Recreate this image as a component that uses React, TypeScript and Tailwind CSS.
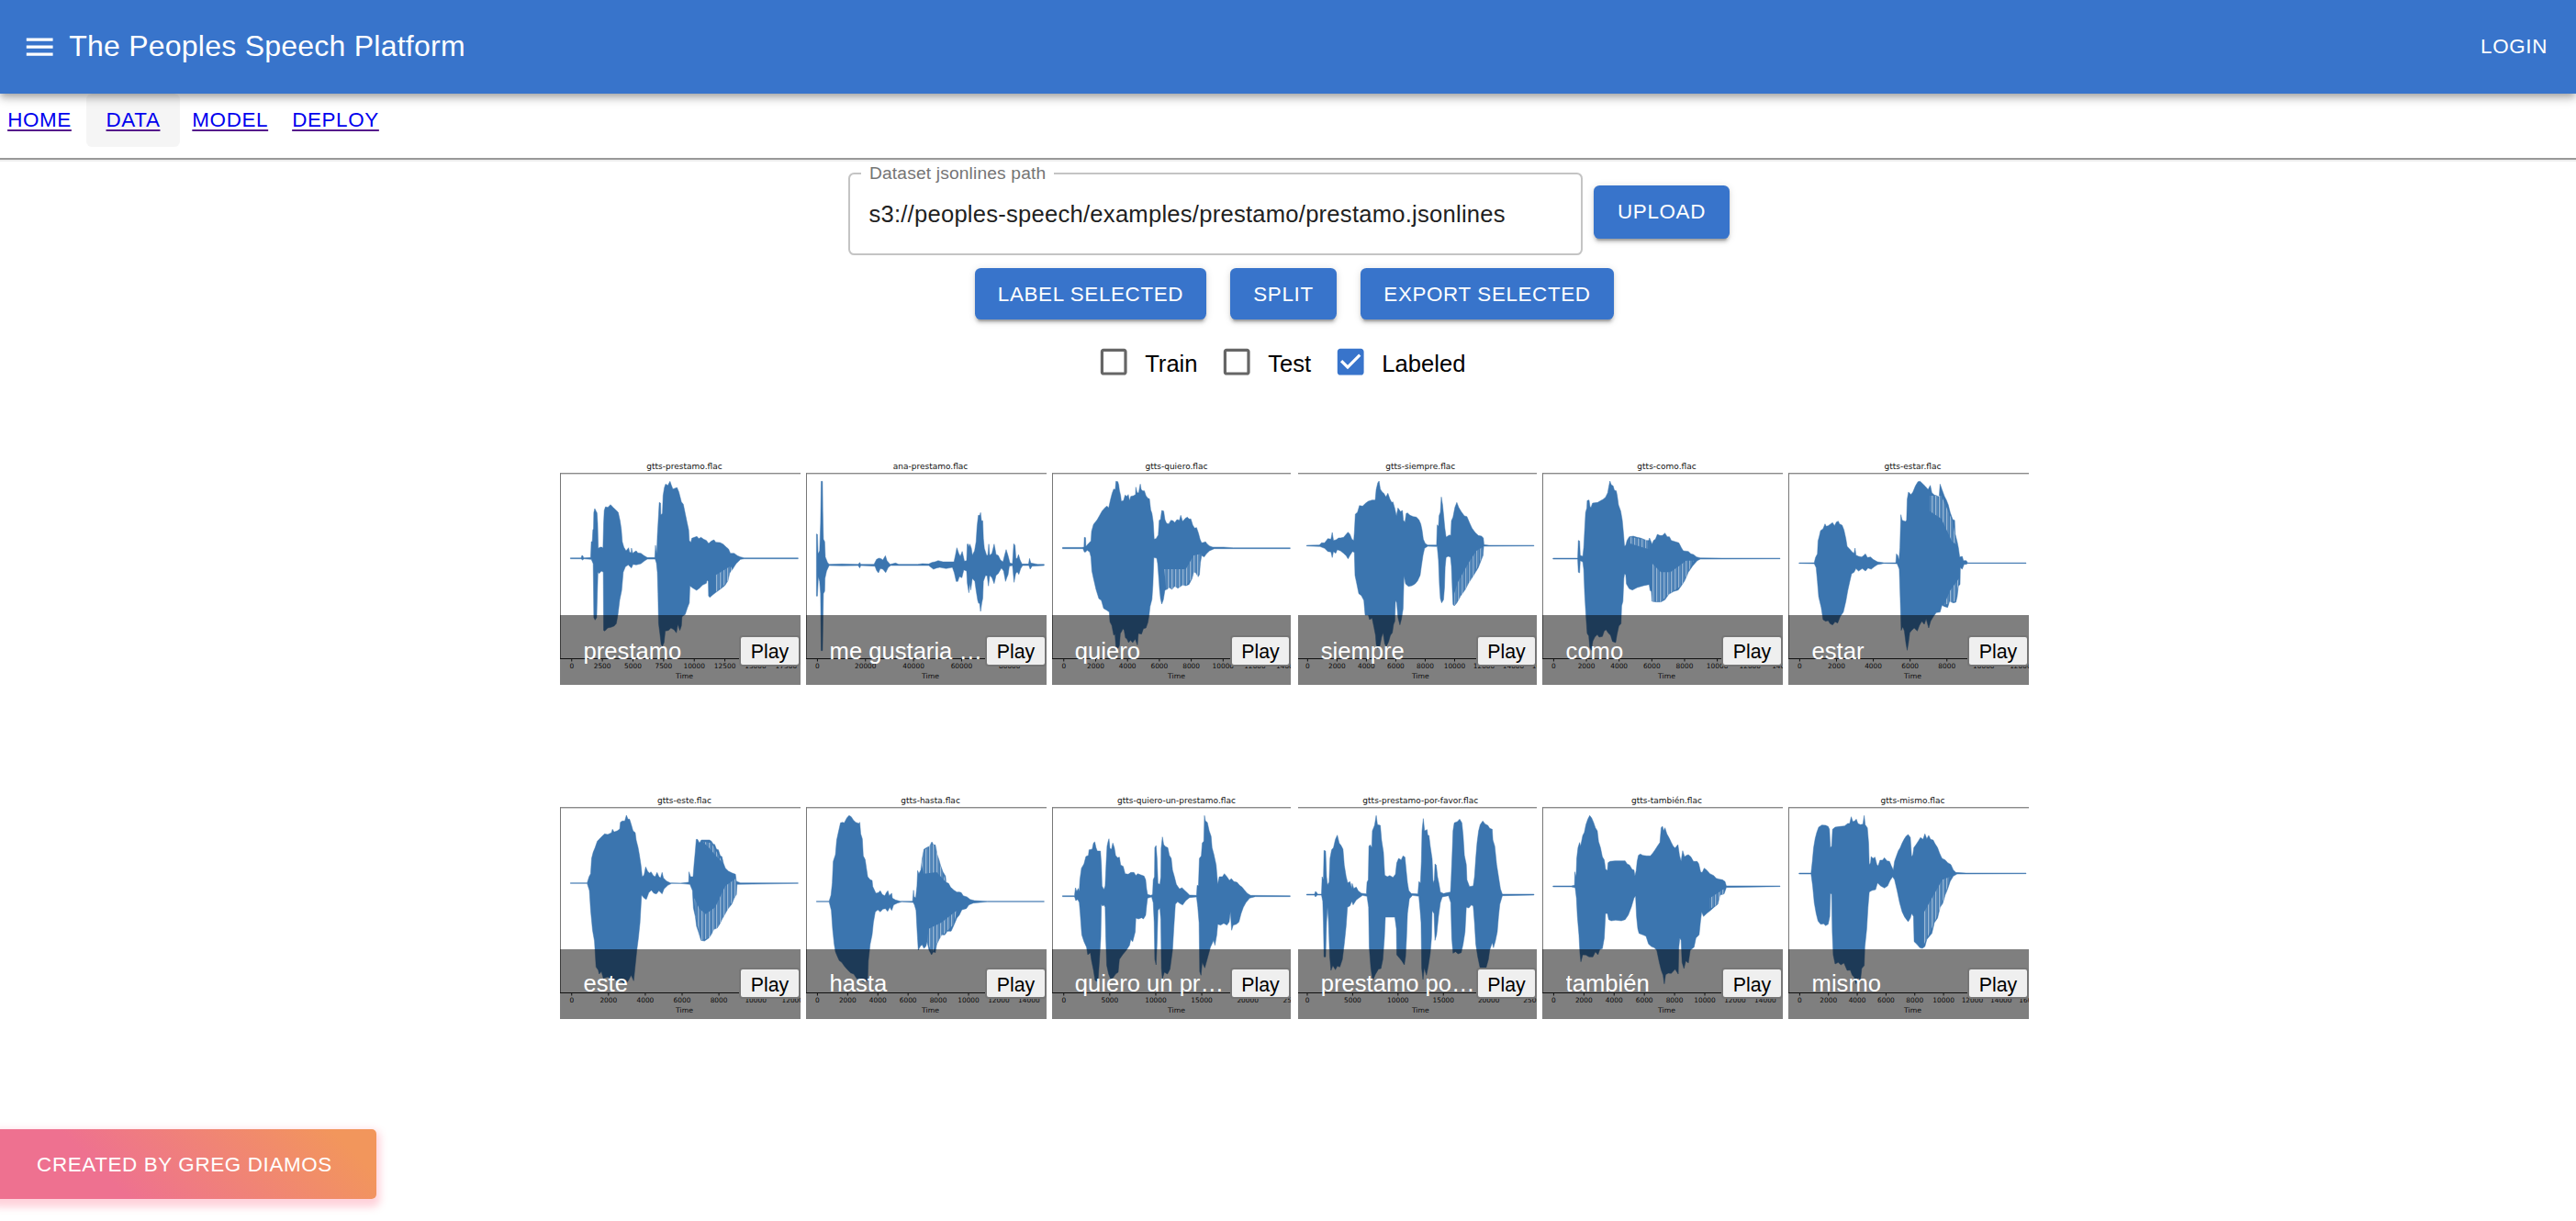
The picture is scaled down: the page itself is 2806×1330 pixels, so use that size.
import React from "react";

type Clip = {
  file: string;
  label: string;
  width: string;
  x0: number;
  row: number;
  zero: number;
  step: number;
  unit: number;
  count: number;
  up: string;
  down: string;
  hatch?: string[];
  noLeft?: boolean;
};

// Horizontal and vertical sampling of the waveform outlines.
const SX = 2.9037;
const SY = 3;

const W262 = "w-[262px]";
const W260 = "w-[260px]";

const CLIPS: Clip[] = [
  {
    file: "gtts-prestamo.flac", label: "prestamo", width: W262, x0: 29, row: 0, zero: 66, step: 96.9, unit: 2500, count: 8,
    up: "62,353 96,353 98,346 101,346 104,353 126,352 128,300 131,300 133,262 135,258 136,205 139,192 143,200 146,206 148,240 150,322 156,318 162,318 165,322 167,240 169,198 173,186 180,188 189,179 195,186 205,196 213,204 219,232 223,260 226,300 231,318 238,330 246,320 249,334 254,337 255,321 259,338 264,334 270,330 275,337 285,338 295,346 305,352 329,352 331,312 335,340 337,280 341,210 343,172 347,174 348,212 353,208 355,150 359,124 363,112 370,116 377,103 381,115 386,128 392,126 399,123 405,138 413,170 419,178 425,208 431,238 436,262 438,297 443,302 446,289 462,283 468,290 475,286 483,292 492,296 499,306 508,298 516,294 522,302 535,303 545,308 555,318 562,324 568,338 580,338 590,346 600,350 612,353 782,353",
    down: "62,356 96,356 100,360 105,356 128,358 134,372 135,450 136,548 140,556 145,548 147,470 149,400 153,404 160,396 166,400 167,590 171,592 180,582 190,580 200,576 207,568 212,540 218,490 224,460 229,400 236,382 245,376 255,386 260,374 270,376 285,372 295,364 305,357 330,357 334,370 337,400 339,470 341,568 345,600 349,636 353,642 358,630 362,592 372,590 380,582 390,588 397,598 402,570 408,590 413,575 415,545 425,538 432,516 438,500 440,445 450,452 461,459 470,452 480,442 492,436 494,426 498,430 499,478 503,482 512,474 522,466 535,456 550,444 560,428 566,402 575,390 586,372 600,358 612,356 782,356",
    hatch: ["520,410 568,380 575,390 560,428 545,446 522,464"],
  },
  {
    file: "ana-prestamo.flac", label: "me gustaria un prestamo", width: W262, x0: 807, row: 0, zero: 843, step: 152, unit: 20000, count: 5,
    up: "840,275 843,276 845,340 850,330 853,240 855,103 859,103 860,200 862,292 866,300 868,350 875,368 880,374 920,373 972,374 977,368 980,374 1022,374 1030,358 1038,354 1045,356 1050,360 1058,346 1063,362 1073,374 1090,370 1100,374 1160,374 1175,372 1195,373 1205,368 1215,366 1225,362 1240,366 1260,366 1275,366 1280,342 1284,320 1290,338 1295,348 1301,332 1308,364 1315,362 1317,308 1320,308 1322,318 1325,308 1330,322 1333,344 1340,330 1345,300 1348,250 1352,214 1357,214 1359,205 1362,232 1366,232 1368,290 1371,322 1378,344 1382,345 1385,308 1388,345 1395,338 1402,308 1405,324 1408,342 1415,345 1422,360 1430,366 1435,345 1440,326 1446,346 1452,370 1460,372 1464,307 1468,312 1471,355 1475,355 1479,342 1484,360 1490,373 1511,373 1514,355 1518,370 1540,374 1560,374",
    down: "840,478 843,478 846,415 850,430 853,470 855,656 859,656 862,470 866,462 867,420 872,396 880,378 920,379 972,378 977,386 980,378 1025,380 1030,394 1036,402 1042,388 1050,390 1059,401 1067,384 1075,378 1195,378 1210,390 1220,386 1230,384 1250,388 1270,384 1276,402 1282,430 1287,430 1292,414 1300,418 1306,392 1315,396 1317,435 1322,467 1325,436 1328,458 1333,420 1341,430 1345,460 1350,492 1353,502 1356,500 1359,528 1363,500 1366,485 1368,430 1375,410 1380,412 1384,445 1388,410 1395,418 1402,437 1408,410 1415,404 1425,386 1432,396 1438,430 1442,418 1446,408 1450,380 1460,378 1465,433 1470,405 1475,398 1480,407 1486,388 1492,378 1512,378 1516,390 1522,380 1560,378",
  },
  {
    file: "gtts-quiero.flac", label: "quiero", width: W260, x0: 17, row: 0, zero: 54, step: 100.8, unit: 2000, count: 8,
    up: "50,319 110,319 118,318 119,286 123,287 124,316 132,306 140,298 142,266 148,244 160,228 175,200 185,188 191,184 196,190 202,162 207,142 212,128 217,130 219,103 225,104 228,115 230,132 234,150 236,168 243,166 248,148 254,152 258,146 262,166 266,152 275,150 281,146 282,122 286,140 291,140 296,112 299,130 304,134 309,134 314,150 320,158 325,160 329,196 333,208 337,236 340,292 346,290 353,278 356,230 360,228 364,198 370,200 374,228 379,240 386,242 393,230 400,232 405,238 412,228 420,230 424,214 430,234 438,224 445,220 450,226 456,226 462,246 468,256 474,254 480,272 485,292 490,304 498,302 502,300 508,308 515,314 525,318 560,318 590,320 770,320",
    down: "50,323 115,323 119,334 123,334 128,328 136,334 140,350 143,396 148,420 156,456 165,486 173,492 180,518 190,524 198,530 200,562 206,574 212,606 216,602 219,645 225,650 230,640 233,600 238,592 241,584 245,590 249,614 254,618 259,630 265,622 272,630 280,618 287,638 290,600 300,602 306,584 314,582 320,564 324,540 327,512 333,488 336,440 339,352 348,354 351,372 354,412 357,455 360,486 364,504 369,490 374,458 382,455 388,450 396,456 405,446 415,452 430,442 440,444 450,440 460,420 465,400 472,402 479,415 483,408 486,370 490,345 498,350 505,340 515,330 530,323 770,323",
    hatch: ["372,390 440,390 465,345 488,340 486,370 479,415 460,420 440,444 378,458"],
  },
  {
    file: "gtts-siempre.flac", label: "siempre", width: W260, x0: 796, row: 0, zero: 826, step: 93, unit: 2000, count: 9, noLeft: true,
    up: "823,312 863,311 870,304 880,304 890,290 900,292 904,270 908,296 916,294 924,288 930,288 940,286 948,276 954,269 960,276 966,292 972,296 974,270 977,210 984,204 990,182 1000,184 1010,174 1018,168 1030,164 1040,164 1043,130 1048,108 1052,102 1056,128 1062,138 1067,142 1074,154 1080,142 1086,160 1092,172 1096,170 1102,192 1107,216 1112,190 1120,202 1126,198 1129,230 1134,236 1138,208 1142,206 1150,214 1160,218 1170,220 1178,228 1184,242 1188,262 1192,292 1198,306 1206,311 1234,311 1236,245 1240,250 1242,215 1246,204 1249,154 1253,180 1256,210 1260,255 1264,285 1275,278 1279,280 1281,232 1286,220 1292,188 1298,172 1304,188 1312,202 1322,216 1330,218 1338,238 1346,256 1356,270 1366,280 1376,282 1382,288 1384,310 1400,312 1542,312",
    down: "823,314 865,316 880,322 890,332 900,334 904,352 908,332 915,338 920,326 930,330 940,338 948,346 954,356 960,345 968,332 974,335 976,410 980,430 988,470 996,476 1004,492 1008,540 1018,540 1022,555 1030,550 1036,580 1041,606 1043,636 1048,650 1055,640 1060,612 1065,598 1070,634 1075,643 1082,628 1088,606 1094,598 1098,570 1102,560 1104,492 1108,500 1112,548 1118,572 1123,552 1128,520 1131,412 1136,438 1145,446 1156,444 1166,438 1174,428 1182,410 1186,380 1191,345 1196,322 1206,315 1236,316 1240,360 1243,440 1246,486 1250,500 1256,490 1259,450 1261,384 1264,352 1270,348 1278,350 1281,380 1284,460 1286,505 1290,510 1298,500 1310,478 1325,456 1335,436 1350,412 1366,385 1376,358 1381,345 1383,315 1542,314",
    hatch: ["1290,510 1325,456 1350,412 1378,350 1380,318 1360,330 1335,370 1300,435 1290,470"],
  },
  {
    file: "gtts-como.flac", label: "como", width: W262, x0: 0, row: 0, zero: 36, step: 103.5, unit: 2000, count: 8,
    up: "34,354 112,354 114,296 118,298 120,345 128,348 131,320 134,262 137,205 141,190 142,166 148,164 151,186 154,188 159,174 175,172 185,166 192,162 200,155 207,140 210,122 214,102 218,114 224,118 228,132 234,134 237,150 241,180 248,200 253,230 257,275 260,314 264,312 268,296 275,284 288,282 300,286 310,288 320,292 330,296 337,296 339,288 344,300 347,308 352,296 358,292 364,276 372,280 380,280 388,272 395,284 402,284 408,296 420,300 432,304 440,320 446,330 462,332 470,340 478,342 488,350 500,353 570,354 752,354",
    down: "34,357 112,357 114,400 118,402 120,362 128,366 131,390 134,470 138,540 142,600 147,608 150,645 155,655 160,625 166,612 174,604 180,612 190,610 196,592 202,588 208,598 216,606 222,626 232,630 236,605 242,576 249,568 251,510 255,495 258,420 260,406 264,408 266,438 275,454 285,458 300,450 320,444 338,440 341,460 345,462 347,495 360,497 375,497 388,490 400,472 415,463 430,458 440,444 450,428 462,400 475,380 490,362 500,357 752,356",
    hatch: ["346,370 375,400 405,400 430,382 455,362 478,362 462,400 440,444 400,472 375,497 346,495", "275,284 337,296 337,325 275,305"],
  },
  {
    file: "gtts-estar.flac", label: "estar", width: W262, x0: 778, row: 0, zero: 814, step: 116.4, unit: 2000, count: 7,
    up: "812,369 860,369 864,352 870,340 872,298 876,282 880,264 888,258 894,242 898,250 904,248 912,242 918,238 924,248 930,236 936,233 940,242 948,246 954,262 960,290 964,316 972,324 980,334 986,338 989,321 992,344 1000,348 1010,350 1016,346 1022,340 1028,352 1038,350 1046,358 1060,366 1080,369 1118,369 1120,340 1124,345 1128,360 1131,320 1134,212 1138,230 1148,234 1152,230 1154,162 1158,138 1166,146 1172,138 1180,118 1188,104 1195,103 1204,112 1212,120 1220,130 1227,116 1232,140 1240,148 1248,150 1255,154 1258,112 1264,130 1272,152 1278,164 1284,180 1290,205 1298,228 1304,230 1306,275 1312,300 1316,320 1320,350 1328,348 1332,362 1341,362 1345,369 1530,369",
    down: "812,371 860,372 866,385 870,430 874,480 882,515 888,555 896,560 904,558 910,568 918,572 926,562 934,566 942,545 952,530 960,495 966,460 972,432 978,405 986,400 992,388 1000,396 1012,388 1022,396 1030,386 1040,390 1050,382 1060,375 1080,371 1122,372 1126,382 1129,390 1132,485 1135,590 1140,578 1145,592 1150,632 1154,655 1158,630 1162,598 1168,590 1176,582 1186,592 1192,575 1200,560 1208,570 1214,552 1222,582 1228,560 1236,546 1246,532 1258,530 1264,508 1272,512 1282,515 1288,495 1300,500 1308,498 1312,480 1316,445 1321,440 1322,385 1328,390 1334,374 1341,374 1345,371 1530,371",
    hatch: ["1225,150 1262,150 1298,235 1310,310 1296,300 1262,225 1225,200", "1290,460 1318,420 1316,440 1305,495 1270,508"],
  },
  {
    file: "gtts-este.flac", label: "este", width: W262, x0: 29, row: 1, zero: 66, step: 116.4, unit: 2000, count: 7,
    up: "62,320 115,320 121,300 126,290 129,240 134,220 140,205 147,184 158,172 170,160 180,162 192,156 195,145 200,154 210,150 218,144 220,122 226,118 234,118 239,99 244,112 249,112 254,128 260,150 267,156 270,180 276,205 280,228 285,262 289,300 295,294 300,268 306,282 312,288 317,284 324,296 330,300 336,286 342,300 347,304 352,286 356,304 366,314 378,320 410,321 436,318 437,284 442,300 450,300 453,260 457,216 460,178 464,178 470,190 476,180 490,180 502,180 508,184 514,194 518,194 524,210 530,212 536,232 541,234 546,256 552,272 562,282 574,288 584,292 587,315 600,320 782,320",
    down: "62,322 115,322 122,345 126,410 132,475 138,510 143,595 150,605 153,618 160,610 166,632 180,628 192,632 200,636 210,640 224,642 236,652 245,640 254,622 262,640 266,600 272,540 277,500 282,450 287,360 295,370 302,374 310,352 318,344 326,354 334,356 342,346 352,356 358,340 370,328 382,322 410,322 440,325 448,345 451,402 457,430 461,462 467,480 475,508 486,510 500,500 508,488 516,472 526,468 534,455 542,438 552,420 560,405 572,390 580,370 587,358 589,325 782,322",
    hatch: ["480,185 508,190 545,256 525,235 500,205", "454,370 470,405 490,422 520,400 552,330 586,305 587,358 552,420 526,468 500,500 475,508 458,430"],
  },
  {
    file: "gtts-hasta.flac", label: "hasta", width: W262, x0: 807, row: 1, zero: 843, step: 95.6, unit: 2000, count: 8,
    up: "840,380 880,380 886,360 890,320 893,250 900,228 904,180 909,156 916,124 922,122 928,124 936,108 943,100 950,104 956,114 964,122 974,126 977,122 980,160 985,176 988,232 994,244 998,272 1002,300 1010,310 1016,312 1018,332 1028,354 1036,352 1042,346 1048,358 1056,362 1062,350 1066,346 1070,362 1078,354 1080,370 1090,376 1105,380 1144,380 1147,344 1149,366 1154,368 1158,330 1160,280 1164,290 1170,278 1174,244 1180,210 1190,204 1198,200 1205,186 1210,196 1216,196 1222,228 1228,246 1232,262 1240,284 1248,298 1250,318 1258,322 1264,334 1275,344 1284,350 1292,350 1298,352 1304,362 1316,366 1326,374 1340,378 1380,380 1560,380",
    down: "840,382 880,382 887,410 891,470 896,520 900,545 906,560 912,574 920,580 928,592 938,604 948,614 958,618 968,634 976,632 984,640 992,645 1002,640 1004,575 1010,520 1016,490 1020,450 1026,415 1034,408 1042,415 1050,406 1058,404 1065,413 1072,400 1078,410 1084,392 1096,386 1110,382 1146,384 1150,392 1155,410 1158,470 1162,540 1168,528 1174,522 1180,534 1186,528 1190,512 1196,540 1204,555 1210,545 1216,548 1220,522 1228,505 1236,490 1246,490 1254,478 1266,478 1276,455 1284,435 1292,425 1300,408 1314,404 1322,392 1336,386 1380,382 1560,382",
    hatch: ["1172,260 1180,215 1205,192 1216,200 1232,265 1250,318 1220,285 1180,290", "1190,510 1205,550 1230,500 1275,455 1284,410 1235,450 1195,470"],
  },
  {
    file: "gtts-quiero-un-prestamo.flac", label: "quiero un prestamo", width: W260, x0: 17, row: 1, zero: 54, step: 145.5, unit: 5000, count: 6,
    up: "50,362 88,362 91,336 95,348 100,338 103,348 105,310 110,272 118,258 124,234 132,230 134,212 144,210 148,190 152,186 156,205 160,216 165,216 170,216 173,260 175,330 181,342 185,330 188,260 191,200 194,186 197,176 200,208 205,210 209,190 214,205 218,230 224,238 230,236 234,262 242,266 248,290 258,292 266,286 276,286 282,296 288,290 298,294 308,298 313,310 316,340 319,358 330,361 335,358 337,310 341,300 342,205 346,198 349,240 352,322 358,325 361,300 362,208 366,170 370,195 376,202 383,205 388,230 394,240 398,278 404,300 410,325 420,340 428,336 436,344 444,352 452,360 474,361 476,328 480,330 483,240 489,232 492,190 497,184 499,100 502,118 508,122 514,150 520,168 523,205 529,228 536,262 541,325 546,300 556,300 562,290 570,300 578,312 584,306 592,316 602,318 610,328 618,334 626,344 634,354 645,361 770,362",
    down: "50,365 88,365 92,378 98,374 103,384 106,420 111,490 118,512 126,530 130,555 138,548 142,575 148,605 153,638 158,642 163,630 167,570 171,500 173,390 177,396 181,392 185,400 187,500 190,590 196,618 202,634 210,630 218,618 226,612 230,570 240,555 252,540 262,524 266,505 272,512 280,480 282,435 290,438 300,434 306,438 313,426 316,395 319,370 332,366 337,385 340,450 342,570 346,588 349,520 352,410 358,402 361,440 363,600 366,634 372,612 382,618 390,602 398,540 402,470 407,390 414,382 422,388 430,392 440,378 452,368 474,366 478,400 482,450 484,610 488,622 492,580 500,598 508,568 518,530 528,508 532,524 538,490 541,455 550,458 560,452 570,458 577,448 581,415 585,475 590,458 600,455 608,448 615,420 622,400 630,385 642,370 660,365 770,365",
  },
  {
    file: "gtts-prestamo-por-favor.flac", label: "prestamo por favor", width: W260, x0: 796, row: 1, zero: 825, step: 143.5, unit: 5000, count: 6, noLeft: true,
    up: "823,357 848,357 851,348 855,352 858,357 870,357 872,300 876,310 878,214 883,216 886,300 889,326 894,318 897,240 902,212 908,205 914,178 920,164 926,190 932,198 938,210 942,262 948,300 953,320 960,316 966,338 967,322 972,338 980,334 986,346 996,354 1012,356 1014,318 1018,310 1020,200 1024,196 1029,205 1031,150 1038,132 1043,100 1047,130 1056,132 1060,180 1066,220 1070,295 1078,300 1086,296 1096,302 1104,292 1108,255 1114,240 1122,245 1128,232 1134,236 1138,280 1142,320 1146,345 1154,355 1175,356 1178,316 1183,320 1186,250 1188,150 1192,110 1196,150 1204,146 1206,164 1210,165 1214,200 1220,242 1223,320 1227,310 1229,258 1233,262 1237,300 1242,325 1246,350 1256,355 1268,352 1278,350 1280,310 1284,210 1286,150 1290,124 1300,120 1307,112 1314,124 1318,165 1322,230 1328,260 1330,310 1338,332 1350,330 1354,300 1358,240 1362,190 1367,150 1372,130 1380,118 1388,128 1396,132 1402,142 1410,145 1412,180 1418,200 1424,260 1430,300 1436,340 1442,357 1542,357",
    down: "823,360 848,360 851,366 856,360 870,360 874,380 876,450 878,562 883,562 886,450 889,400 892,440 896,560 900,606 906,590 914,604 920,592 928,595 936,570 942,520 948,460 952,400 960,395 966,380 970,392 980,376 990,368 1000,361 1014,364 1019,400 1021,530 1026,598 1032,640 1040,620 1050,602 1058,600 1064,570 1069,500 1072,432 1102,432 1107,470 1108,555 1116,565 1124,575 1132,588 1136,560 1139,500 1142,420 1148,372 1158,361 1178,364 1182,410 1185,450 1187,600 1191,636 1195,598 1202,622 1208,590 1214,550 1218,500 1220,412 1226,420 1229,508 1234,490 1240,430 1246,385 1252,366 1272,362 1279,385 1282,500 1286,550 1294,545 1302,552 1312,548 1318,520 1324,480 1328,400 1336,402 1344,392 1350,396 1354,450 1358,520 1364,560 1372,600 1380,622 1390,600 1398,570 1402,540 1410,515 1414,532 1420,510 1426,480 1430,430 1434,390 1442,362 1542,360",
  },
  {
    file: "gtts-también.flac", label: "también", width: W262, x0: 0, row: 1, zero: 36, step: 95.6, unit: 2000, count: 8,
    up: "34,330 92,330 102,328 103,284 107,300 109,240 113,205 118,188 121,200 124,185 128,165 133,155 138,130 144,112 150,100 156,108 162,122 168,140 174,150 178,185 184,205 190,235 196,245 200,275 206,280 208,254 214,250 230,248 262,248 268,258 276,262 284,276 290,278 293,298 297,280 300,250 304,230 310,226 318,230 330,232 342,232 350,222 358,210 364,200 372,188 376,140 380,135 384,150 388,140 394,160 402,175 408,188 414,200 420,206 429,195 434,230 439,250 444,215 450,235 456,230 462,228 470,235 478,250 490,250 495,258 501,285 506,286 512,272 520,278 530,290 542,296 550,305 560,308 570,310 578,316 582,330 752,330",
    down: "34,333 92,333 104,336 108,370 111,430 116,490 119,550 122,578 128,555 138,556 148,562 160,562 168,545 176,555 182,538 190,535 196,500 200,420 206,420 210,440 218,444 232,442 250,444 262,440 272,425 282,398 290,370 295,362 298,430 302,470 306,485 318,490 328,494 336,520 345,528 354,532 362,540 370,580 376,605 382,622 386,650 390,620 398,615 408,616 420,602 430,618 432,530 435,500 439,508 442,580 448,600 454,575 462,582 468,540 480,530 486,500 496,490 500,450 504,415 510,430 520,420 532,410 545,398 555,390 562,360 575,356 582,335 752,332",
    hatch: ["530,370 575,340 575,356 562,360 555,390 530,405"],
  },
  {
    file: "gtts-mismo.flac", label: "mismo", width: W262, x0: 778, row: 1, zero: 814, step: 91, unit: 2000, count: 9,
    up: "812,288 850,288 854,250 858,205 863,175 868,155 874,138 884,131 896,132 904,136 908,145 911,205 915,200 918,145 926,138 940,136 956,134 966,126 972,126 977,104 982,120 988,118 993,112 998,126 1006,130 1014,128 1018,100 1021,130 1028,140 1032,190 1034,260 1038,255 1040,234 1046,240 1052,236 1058,260 1062,265 1068,246 1076,246 1082,238 1090,248 1098,250 1104,265 1110,278 1114,250 1120,232 1126,215 1132,205 1138,190 1144,178 1150,168 1157,162 1164,172 1168,235 1172,228 1175,205 1182,195 1190,182 1196,172 1204,178 1210,160 1216,176 1222,165 1228,178 1236,180 1242,192 1250,205 1256,222 1264,240 1274,245 1282,254 1292,260 1300,278 1308,286 1340,288 1530,288",
    down: "812,291 850,291 855,330 860,385 866,420 872,445 880,455 890,454 896,460 904,455 909,430 911,355 915,356 917,480 920,555 926,585 936,580 944,588 954,582 964,606 974,605 980,622 986,628 992,650 1000,630 1006,640 1010,600 1018,590 1020,530 1026,470 1030,400 1034,350 1042,345 1054,342 1060,320 1070,330 1082,337 1092,330 1100,312 1108,300 1114,310 1122,345 1130,385 1138,415 1146,432 1157,447 1164,435 1168,420 1174,430 1176,512 1184,520 1194,532 1202,534 1210,528 1216,505 1224,495 1232,485 1240,450 1250,435 1258,400 1266,388 1274,360 1282,340 1290,315 1300,298 1312,291 1530,290",
    hatch: ["1205,420 1265,310 1290,300 1274,360 1240,450 1215,505 1205,525"],
  },
];

function Plot({ clip, id }: { clip: Clip; id: string }) {
  const y0 = clip.row === 0 ? 18 : 15;
  const outline = clip.up + " " + clip.down.split(" ").reverse().join(" ");
  const mid = clip.noLeft ? 133.3 : 135.5;
  const ticks = Array.from({ length: clip.count }, (_, i) => ({
    x: (clip.zero + i * clip.step - clip.x0) / SX,
    value: i * clip.unit,
  }));
  return (
    <svg className="block h-[250px] w-full overflow-hidden [font-family:'DejaVu_Sans',sans-serif]">
      <defs>
        <pattern id={id} width="11.615" height="40" patternUnits="userSpaceOnUse">
          <rect width="3.2" height="40" fill="#fff" opacity="0.5" />
          <rect x="5.8" width="2.9" height="40" fill="#fff" opacity="0.2" />
        </pattern>
      </defs>
      <text x={mid} y="14.6" fontSize="9" textAnchor="middle" fill="#111">{clip.file}</text>
      <rect x="0" y="19" width="262" height="1.4" fill="#8a8a8a" />
      {!clip.noLeft && <rect x="0" y="19.5" width="1" height="202" fill="#777" />}
      <g transform={`scale(${1 / SX} ${1 / SY}) translate(${-clip.x0} ${-y0})`}>
        <polygon points={outline} fill="#3b75af" stroke="#3b75af" strokeWidth="1.4" strokeLinejoin="round" />
        {clip.hatch?.map((h) => (
          <polygon key={h} points={h} fill={`url(#${id})`} />
        ))}
      </g>
      <rect x="0" y="221" width="262" height="1" fill="#222" />
      {ticks.map((t) => (
        <g key={t.value}>
          <rect x={t.x - 0.5} y="222" width="1" height="2.5" fill="#222" />
          <text x={t.x} y="232.4" fontSize="7.4" textAnchor="middle" fill="#111">{t.value}</text>
        </g>
      ))}
      <text x={mid} y="242.8" fontSize="7.7" textAnchor="middle" fill="#111">Time</text>
    </svg>
  );
}

function Tile({ clip, id }: { clip: Clip; id: string }) {
  const wide = clip.width === W262;
  const first = clip.row === 0;
  return (
    <div className={`relative h-[250px] overflow-hidden ${clip.width}`}>
      <Plot clip={clip} id={id} />
      <div className={`absolute inset-x-0 bottom-0 flex h-[76px] items-start bg-black/50 ${first ? "pt-[22px]" : "pt-[20px]"}`}>
        <span className={`-mt-px min-w-0 flex-1 truncate text-[25.6px] leading-[36px] text-white ${wide ? "ml-[25.6px]" : "ml-[24.8px]"}`}>{clip.label}</span>
        <button className={`h-[34px] shrink-0 rounded-[4px] border-2 border-[#767676] bg-[#efefef] text-center text-[21.33px] text-black ${wide ? "w-[67px]" : "w-[66px]"} ${first ? "leading-[32px]" : "leading-[34px]"}`}>
          Play
        </button>
      </div>
    </div>
  );
}

const RAISED =
  "shadow-[0_4.8px_1.6px_-3.2px_rgba(0,0,0,0.2),0_3.2px_3.2px_0_rgba(0,0,0,0.14),0_1.6px_8px_0_rgba(0,0,0,0.12)]";

function Action({ size, children }: { size: string; children: string }) {
  return (
    <button className={`rounded-[6.4px] bg-[#3874cb] text-[22.4px] tracking-[0.64px] text-white ${RAISED} ${size}`}>
      {children}
    </button>
  );
}

function Check({ label, checked, gap }: { label: string; checked?: boolean; gap: string }) {
  return (
    <label className={`flex items-center text-[25.6px] text-black ${gap}`}>
      <svg viewBox="0 0 24 24" className={`mr-[15.2px] size-[38.4px] shrink-0 ${checked ? "fill-[#3874cb]" : "fill-[#666]"}`}>
        {checked ? (
          <path d="M19 3H5c-1.11 0-2 .9-2 2v14c0 1.1.89 2 2 2h14c1.11 0 2-.9 2-2V5c0-1.1-.89-2-2-2zm-9 14l-5-5 1.41-1.41L10 14.17l7.59-7.59L19 8l-9 9z" />
        ) : (
          <path d="M19 5v14H5V5h14m0-2H5c-1.1 0-2 .9-2 2v14c0 1.1.9 2 2 2h14c1.1 0 2-.9 2-2V5c0-1.1-.9-2-2-2z" />
        )}
      </svg>
      <span className="pt-[2px] leading-[38px]">{label}</span>
    </label>
  );
}

const NAV = [
  { label: "HOME", box: "w-[102px]" },
  { label: "DATA", box: "w-[102px] bg-[#f5f5f5]" },
  { label: "MODEL", box: "w-[109.5px]" },
  { label: "DEPLOY", box: "w-[120px]" },
];

export default function App() {
  return (
    <div className="flex h-[1330px] w-[2806px] flex-col overflow-hidden bg-white [font-family:'Liberation_Sans',Arial,sans-serif]">
      <header className="relative z-10 flex h-[102px] shrink-0 items-center bg-[#3874cb] pl-[23.8px] pr-[31px] text-white shadow-[0_3.2px_6.4px_-1.6px_rgba(0,0,0,0.2),0_6.4px_8px_0_rgba(0,0,0,0.14),0_1.6px_16px_0_rgba(0,0,0,0.12)]">
        <svg viewBox="0 0 24 24" className="size-[38.4px] fill-white">
          <path d="M3 18h18v-2H3v2zm0-5h18v-2H3v2zm0-7v2h18V6H3z" />
        </svg>
        <h1 className="ml-[13px] flex-1 pb-[3px] text-[32px] leading-[50px] tracking-[0.24px]">The Peoples Speech Platform</h1>
        <button className="text-[22.4px] tracking-[0.64px]">LOGIN</button>
      </header>

      <nav className="-ml-2 flex h-[70px] shrink-0 items-start">
        {NAV.map((n) => (
          <a key={n.label} className={`h-[58px] rounded-[6.4px] text-center text-[22.4px] leading-[58px] tracking-[0.64px] text-[#0000ee] underline decoration-[#551a8b] decoration-2 underline-offset-[2.5px] ${n.box}`}>
            {n.label}
          </a>
        ))}
      </nav>
      <div className="h-1 shrink-0 border-t-2 border-b-2 border-t-[#999] border-b-[#eee]" />

      <main className="flex flex-col">
        <section className="ml-[924px] mt-3 flex h-[90px] items-start">
          <div className="relative flex h-[90px] w-[800px] items-center rounded-[6.4px] border-2 border-[#c4c4c4] pl-[20.4px]">
            <span className="absolute -top-[13px] left-[12px] bg-white px-[9px] text-[19.2px] leading-[24px] tracking-[0.16px] text-[#757575]">Dataset jsonlines path</span>
            <span className="text-[25.6px] leading-[30px] tracking-[0.24px] text-[#212121]">s3://peoples-speech/examples/prestamo/prestamo.jsonlines</span>
          </div>
          <div className="ml-3 mt-[14px]">
            <Action size="h-[58px] w-[148px]">UPLOAD</Action>
          </div>
        </section>

        <section className="ml-[1062px] mt-[14px] flex h-[56px] gap-[26px]">
          <Action size="h-[56px] w-[252px] pt-px">LABEL SELECTED</Action>
          <Action size="h-[56px] w-[116px] pt-px">SPLIT</Action>
          <Action size="h-[56px] w-[276px] pt-px">EXPORT SELECTED</Action>
        </section>

        <section className="ml-[1193.6px] mt-[27px] flex h-[39px] items-center">
          <Check label="Train" gap="w-[134px]" />
          <Check label="Test" gap="w-[124.2px]" />
          <Check label="Labeled" checked gap="w-[160px]" />
        </section>

        <section className="ml-[610px] mt-[82px] grid grid-cols-[268px_268px_268px_266px_268px_262px] gap-y-[114px]">
          {CLIPS.map((c, i) => (
            <Tile key={c.file} clip={c} id={`strokes-${i}`} />
          ))}
        </section>
      </main>

      <footer className="mt-[120px]">
        <button className="-ml-2 h-[76px] w-[418px] rounded-[5px] bg-[linear-gradient(45deg,#ee7190_30%,#f2965c_90%)] pt-[2px] text-[22.4px] tracking-[0.64px] text-white shadow-[0_4.8px_8px_3.2px_rgba(255,105,135,0.3)]">
          CREATED BY GREG DIAMOS
        </button>
      </footer>
    </div>
  );
}
